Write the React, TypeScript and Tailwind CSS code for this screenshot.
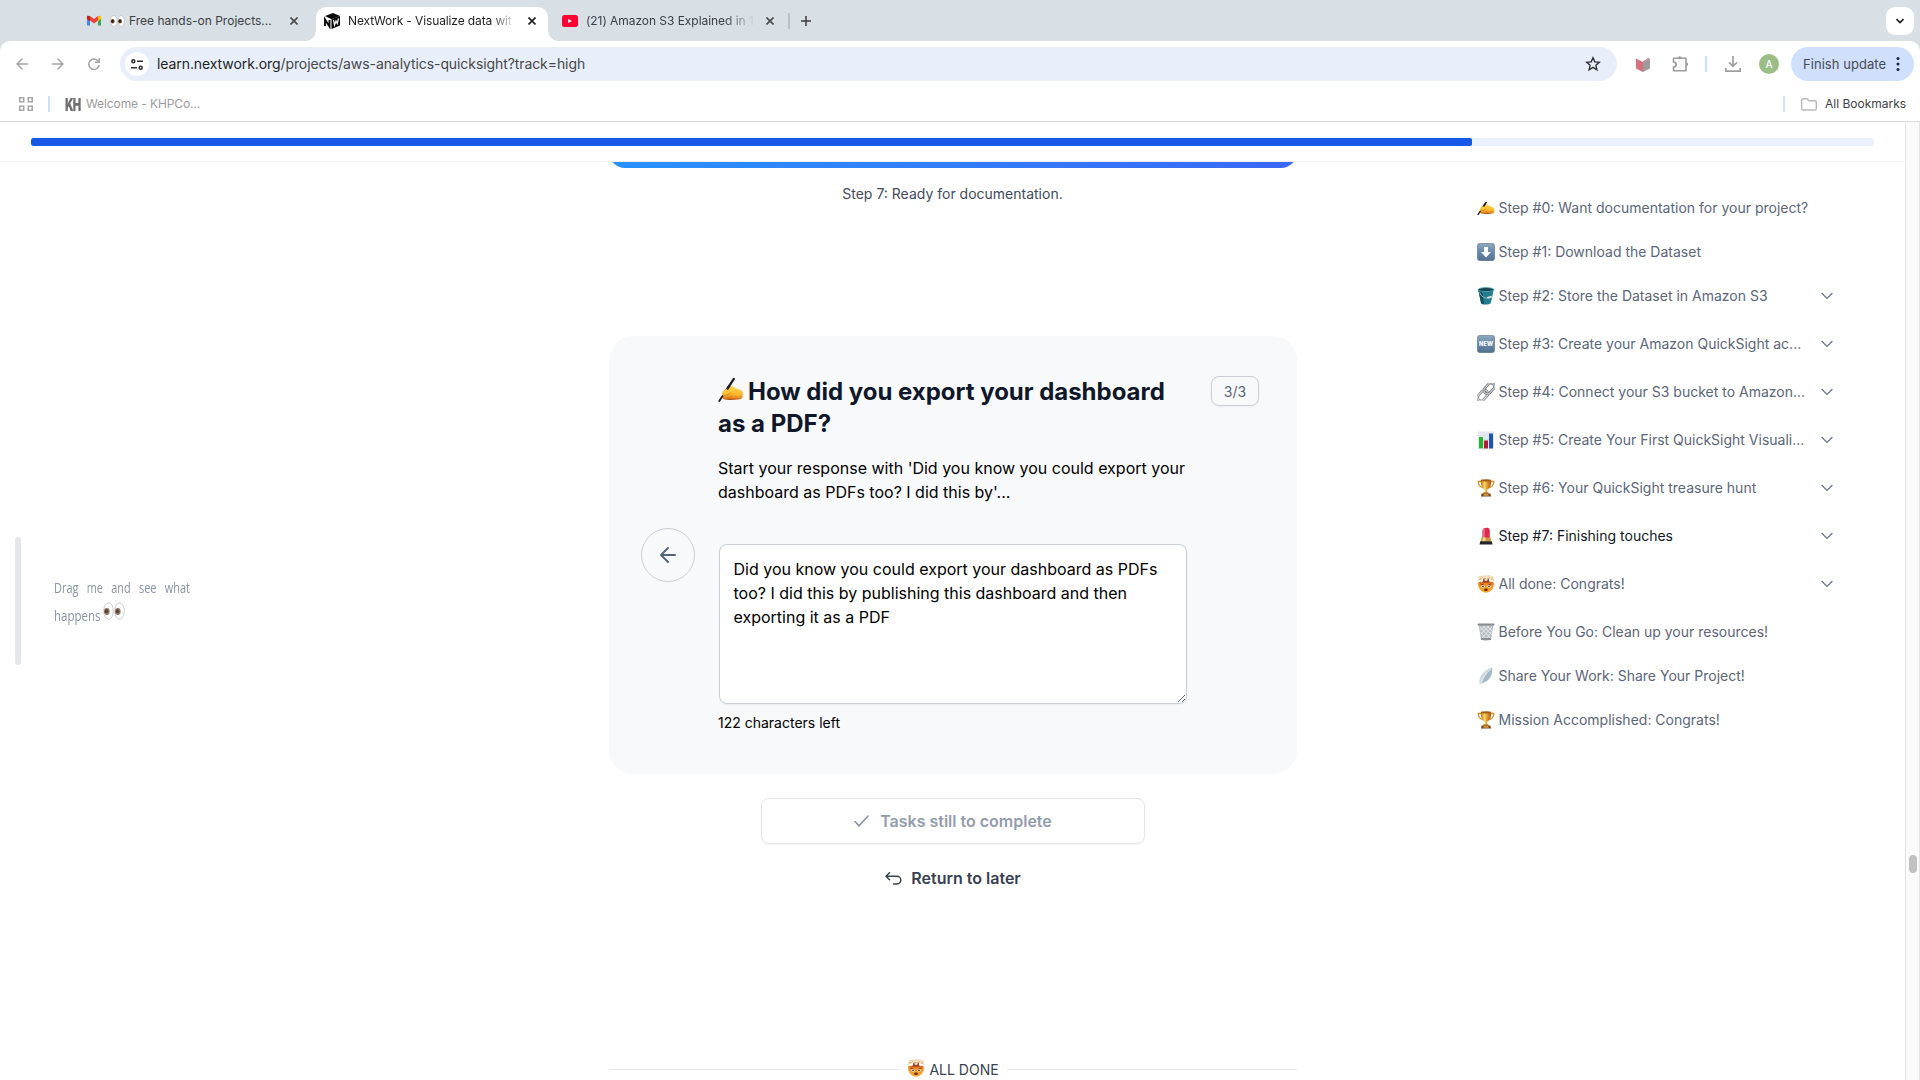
import type { ReactNode } from "react";

function Hand({ className = "", viewBox = "0 0 24 24" }: { className?: string; viewBox?: string }) {
  return (
    <svg viewBox={viewBox} className={className}>
      <defs>
        <linearGradient id="skin" x1="0" y1="0" x2="0" y2="1">
          <stop offset="0" stopColor="#ffd64a" />
          <stop offset="0.6" stopColor="#fcb62f" />
          <stop offset="0.85" stopColor="#e8891f" />
          <stop offset="1" stopColor="#a8480f" />
        </linearGradient>
      </defs>
      <path d="M4.500 14.500C6 12 9 9.300 12 9C14 8.900 15 9.400 16 10.300C18 11.300 20.500 11.800 22.500 13C24.300 14.500 24.300 19 22.800 20.600C19 22.300 9 22.300 5.500 21.300C3.300 20.500 3.200 17.500 4.500 14.500Z" fill="url(#skin)" />
      <path d="M5.500 17.600C8 17.800 10 16.800 12 15.500M6.500 20C9 20.200 11.500 19.500 13.500 18.300" fill="none" stroke="#d27c1b" strokeWidth="0.9" />
      <path d="M15.200 1.800L6.500 15" stroke="#1c2026" strokeWidth="2.200" strokeLinecap="round" />
      <path d="M4.200 18.500L1.200 23" stroke="#1c2026" strokeWidth="1.800" strokeLinecap="round" />
      <path d="M4.500 15.500C6 12.500 9.500 9.200 12.300 9.100C13.300 9.800 12.500 11.200 11.500 12L7 17Z" fill="#fec63b" />
      <path d="M11.200 8L8.700 11.800" stroke="#1c2026" strokeWidth="2.200" />
    </svg>
  );
}

function Eyes({ className }: { className: string }) {
  return (
    <svg viewBox="0 0 22 18" className={className}>
      <g fill="#fff" stroke="#b9b9b9" strokeWidth="0.900">
        <ellipse cx="5.500" cy="9" rx="4.800" ry="8.300" />
        <ellipse cx="16.500" cy="9" rx="4.800" ry="8.300" />
      </g>
      <g fill="#7a5130">
        <ellipse cx="3.800" cy="9.500" rx="2.800" ry="3.400" />
        <ellipse cx="14.800" cy="9.500" rx="2.800" ry="3.400" />
      </g>
      <g fill="#1f1612">
        <ellipse cx="3.500" cy="9.300" rx="1.600" ry="2" />
        <ellipse cx="14.500" cy="9.300" rx="1.600" ry="2" />
      </g>
    </svg>
  );
}

function MindBlown({ className = "size-[18px]" }: { className?: string }) {
  return (
    <svg viewBox="0 0 18 18" className={className}>
      <defs>
        <linearGradient id="face" x1="0" y1="0" x2="0" y2="1">
          <stop offset="0" stopColor="#e8641c" />
          <stop offset="0.5" stopColor="#f79a24" />
          <stop offset="1" stopColor="#f2a52e" />
        </linearGradient>
      </defs>
      <path d="M1.300 7.500C2.500 5.800 5 7.500 6.500 6.500C8 5.500 10 5.500 11.500 6.500C13 7.500 15.500 5.800 16.700 7.500C17.500 13 14 17.600 9 17.600C4 17.600 0.500 13 1.300 7.500Z" fill="url(#face)" />
      <path d="M5 7.800C6 6.500 6.500 5 6 3.500H12C11.500 5 12 6.500 13 7.800Z" fill="#9b4420" />
      <g fill="#f2ddbd">
        <circle cx="3" cy="3" r="2" /><circle cx="6.200" cy="1.800" r="1.700" /><circle cx="9.300" cy="1.900" r="1.800" />
        <circle cx="12.300" cy="1.800" r="1.700" /><circle cx="15.200" cy="3" r="2" /><circle cx="1.400" cy="5.200" r="1" />
        <circle cx="16.700" cy="5.200" r="1" /><circle cx="9" cy="4.500" r="1.600" />
      </g>
      <path d="M2.500 4.200L4.500 3.500M7.500 3L9 4M11 3.500L12.500 2.800M14 4.300L15.500 4M4.500 1.500L5.500 2.500" stroke="#e0914a" strokeWidth="0.900" />
      <path d="M3.500 8.800L6.700 10M14.500 8.800L11.300 10" stroke="#6e2c10" strokeWidth="0.900" />
      <circle cx="6" cy="11.300" r="1.500" fill="#fff" /><circle cx="12" cy="11.300" r="1.500" fill="#fff" />
      <circle cx="6" cy="11.300" r="0.900" fill="#4a210f" /><circle cx="12" cy="11.300" r="0.900" fill="#4a210f" />
      <ellipse cx="9" cy="14.800" rx="1.900" ry="1.200" fill="#6b2a12" />
    </svg>
  );
}

const Trophy = () => (
  <svg viewBox="0 0 18 18" className="size-[18px]">
    <defs>
      <linearGradient id="gold" x1="0" y1="0" x2="1" y2="0">
        <stop offset="0" stopColor="#b8691a" />
        <stop offset="0.350" stopColor="#fbd668" />
        <stop offset="0.650" stopColor="#dd9528" />
        <stop offset="1" stopColor="#a05512" />
      </linearGradient>
    </defs>
    <path d="M4.500 2.500H1.200C1.200 6 3 8 6.500 9M13.500 2.500H16.800C16.800 6 15 8 11.500 9" fill="none" stroke="#d99229" strokeWidth="1.300" />
    <path d="M3.800 1.200H14.200C14.200 6.500 12.800 9.800 10.200 10.600V13.500H7.800V10.600C5.200 9.800 3.800 6.500 3.800 1.200Z" fill="url(#gold)" />
    <ellipse cx="9" cy="1.400" rx="5.200" ry="1.100" fill="#a45c17" />
    <path d="M6.800 13H11.200L12 14.800H6Z" fill="#d58b26" />
    <path d="M4.600 14.500H13.400L14 17.600H4Z" fill="#7c4416" />
    <rect x="6.500" y="15.300" width="5" height="1.300" fill="#e4b252" />
  </svg>
);

function BlueTile({ children }: { children: ReactNode }) {
  return (
    <svg viewBox="0 0 18 18" className="size-[18px]">
      <defs>
        <linearGradient id="tile" x1="0" y1="0" x2="0" y2="1">
          <stop offset="0" stopColor="#8fa9bf" />
          <stop offset="0.5" stopColor="#6689a8" />
          <stop offset="1" stopColor="#54718f" />
        </linearGradient>
      </defs>
      <rect x="0.300" y="0.300" width="17.400" height="17.400" rx="3" fill="url(#tile)" stroke="#5c7186" strokeWidth="0.6" />
      {children}
    </svg>
  );
}

const DownTile = () => (
  <BlueTile>
    <path d="M7 4H11V9H14L9 14.500L4 9H7Z" fill="#fff" />
  </BlueTile>
);

const NewTile = () => (
  <BlueTile>
    <text x="9" y="11.200" textAnchor="middle" textLength="14" lengthAdjust="spacingAndGlyphs" fontSize="6.200" fontWeight="800" fontFamily="Inter" fill="#fff">NEW</text>
  </BlueTile>
);

const Bucket = () => (
  <svg viewBox="0 0 18 18" className="size-[18px]">
    <path d="M1.200 2.500L4 16C5.500 18 12 18 13.800 16L16.800 2.500Z" fill="#217d8f" />
    <path d="M1.200 2.500L4 16C4.600 17 6 17.400 7 17.500L5 3Z" fill="#15505e" />
    <ellipse cx="9" cy="2.600" rx="7.900" ry="2" fill="#16444f" stroke="#4cb2c0" strokeWidth="0.8" />
    <path d="M2.500 5C4 11 11 13 15.500 9.500" fill="none" stroke="#9ab7bd" strokeWidth="0.9" />
    <path d="M11 10.600L14 9.800" stroke="#dfe9ea" strokeWidth="1.700" strokeLinecap="round" />
  </svg>
);

const LinkIcon = () => (
  <svg viewBox="0 0 18 18" className="size-[18px]">
    <g fill="none" transform="rotate(-48 9 9)">
      <rect x="-1.800" y="5.600" width="12" height="6.800" rx="3.400" stroke="#6a6f75" strokeWidth="2.500" />
      <rect x="-1.800" y="5.600" width="12" height="6.800" rx="3.400" stroke="#d6d9dc" strokeWidth="1.300" />
      <rect x="7.800" y="5.600" width="12" height="6.800" rx="3.400" stroke="#5c6166" strokeWidth="2.500" />
      <rect x="7.800" y="5.600" width="12" height="6.800" rx="3.400" stroke="#c9ccd0" strokeWidth="1.300" />
    </g>
  </svg>
);

const Chart = () => (
  <svg viewBox="0 0 18 18" className="size-[18px]">
    <rect x="1" y="0.500" width="16" height="17" fill="#e4eaef" />
    <path d="M1 4.500H17M1 8.500H17M1 12.500H17" stroke="#cdd6dd" strokeWidth="0.5" />
    <rect x="2" y="6" width="4" height="11.500" fill="#2ab12f" />
    <rect x="7" y="9.500" width="4" height="8" fill="#b51a35" />
    <rect x="12" y="2.500" width="4" height="15" fill="#1f55b0" />
  </svg>
);

const Lipstick = () => (
  <svg viewBox="0 0 18 18" className="size-[18px]">
    <path d="M5.500 11V4C5.500 1.500 8.500 0.300 11.500 1L12.800 3V11Z" fill="#e0284f" />
    <path d="M5.500 11V4C5.500 2.600 6.500 1.600 8 1.100V11Z" fill="#f2607c" />
    <path d="M4.500 10.500H13.500L14.300 14.500H3.700Z" fill="#c79a3d" />
    <path d="M6 10.500H8.500V14.500H5.500Z" fill="#f4de91" />
    <path d="M3.200 14.300H14.800L15.500 17.500H2.500Z" fill="#26242b" />
  </svg>
);

const Trash = () => (
  <svg viewBox="0 0 18 18" className="size-[18px]">
    <path d="M1.500 1.500L4 16.800C6 17.900 12 17.900 14 16.800L16.500 1.500Z" fill="#b9bec3" />
    <path d="M3 4L13 15M6 3L14 11M10 3L15 8M3.500 9L9 16M15 4L5 15M12 3L4 11M8 3L3.500 7M14.500 9L9 16" stroke="#eef0f1" strokeWidth="0.8" />
    <path d="M4 16H14" stroke="#858b91" strokeWidth="1.800" />
    <rect x="0.500" y="0.600" width="17" height="2" rx="0.800" fill="#868c91" />
  </svg>
);

const Feather = () => (
  <svg viewBox="0 0 18 18" className="size-[18px]">
    <path d="M14.800 0.500C16 6 14 12 8 15L4 17.500L2.500 17C1.500 9 6 3.500 14.800 0.500Z" fill="#cfdde3" />
    <path d="M14.800 0.500C16 6 14 12 8 15L4.500 16.500C6 10 10 5 14.800 0.500Z" fill="#a3bac4" />
    <path d="M14 2C9 6 5.500 11 4 17.500" fill="none" stroke="#eef4f6" strokeWidth="0.8" />
  </svg>
);

function Chevron() {
  return (
    <svg viewBox="0 0 12 8" className="h-2 w-3" fill="none" stroke="#64748b" strokeWidth="1.200">
      <path d="M0.600 1L6 6.500L11.400 1" />
    </svg>
  );
}

function Close({ dark = false }: { dark?: boolean }) {
  return (
    <svg viewBox="0 0 8 8" className="size-2 shrink-0" stroke={dark ? "#1f1f1f" : "#474747"} strokeWidth="1.600">
      <path d="M0.500 0.500L7.500 7.500M7.500 0.500L0.500 7.500" />
    </svg>
  );
}

const steps: { icon: ReactNode; label: string; expandable?: boolean; active?: boolean }[] = [
  { icon: <Hand viewBox="0 5.500 24.500 18" className="h-[13px] w-[18px]" />, label: "Step #0: Want documentation for your project?" },
  { icon: <DownTile />, label: "Step #1: Download the Dataset" },
  { icon: <Bucket />, label: "Step #2: Store the Dataset in Amazon S3", expandable: true },
  { icon: <NewTile />, label: "Step #3: Create your Amazon QuickSight ac...", expandable: true },
  { icon: <LinkIcon />, label: "Step #4: Connect your S3 bucket to Amazon...", expandable: true },
  { icon: <Chart />, label: "Step #5: Create Your First QuickSight Visuali...", expandable: true },
  { icon: <Trophy />, label: "Step #6: Your QuickSight treasure hunt", expandable: true },
  { icon: <Lipstick />, label: "Step #7: Finishing touches", expandable: true, active: true },
  { icon: <MindBlown />, label: "All done: Congrats!", expandable: true },
  { icon: <Trash />, label: "Before You Go: Clean up your resources!" },
  { icon: <Feather />, label: "Share Your Work: Share Your Project!" },
  { icon: <Trophy />, label: "Mission Accomplished: Congrats!" },
];

function TabStrip() {
  return (
    <div className="flex h-[41px] shrink-0 bg-[#d8dfe5] text-[12px] text-[#3c4043]">
      <div className="flex h-[41px] w-[306px] items-center pl-[87px]">
        <svg viewBox="0 0 14 11" className="h-[11px] w-[14px] shrink-0">
          <path d="M0 1.500V10.500H3V4Z" fill="#4285f4" />
          <path d="M14 1.500V10.500H11V4Z" fill="#34a853" />
          <path d="M11 1L14 0.800V4L11 6.200Z" fill="#fbbc04" />
          <path d="M3 1L0 0.800V4L3 6.200Z" fill="#c5221f" />
          <path d="M3 1L7 4L11 1V5.500L7 8.500L3 5.500Z" fill="#ea4335" />
        </svg>
        <Eyes className="mr-1 ml-[9px] h-3 w-[15px] shrink-0" />
        <span className="w-[151px] overflow-hidden whitespace-nowrap">Free hands-on Projects…</span>
        <span className="ml-[10px]"><Close /></span>
      </div>
      <div className="flex h-[41px] w-[252px] items-end">
        <div className="size-[10px] bg-[radial-gradient(circle_at_0_0,#d8dfe5_9.500px,#ffffff_10px)]" />
        <div className="flex h-[34px] w-[232px] items-center rounded-t-[10px] bg-white pb-[6px] pl-2 text-[#1f1f1f]">
          <svg viewBox="0 0 16 16" className="size-4 shrink-0">
            <path d="M1 3L9 0L16 3L7.500 6.200Z" fill="#0a0a0a" />
            <path d="M7.500 6.200L16 3V12.500L7.500 16Z" fill="#0a0a0a" />
            <path d="M1 13V6.500L5.500 13.500V7" fill="none" stroke="#0a0a0a" strokeWidth="1.900" />
            <path d="M9.500 7L10.500 12L12 8L13.300 10.500L14.500 5.500" fill="none" stroke="#fff" strokeWidth="1.200" />
          </svg>
          <span className="ml-2 w-[168px] tracking-[-0.120px] whitespace-nowrap [mask-image:linear-gradient(to_right,#000_85%,transparent)]">NextWork - Visualize data wit</span>
          <span className="ml-[12px]"><Close dark /></span>
        </div>
        <div className="size-[10px] bg-[radial-gradient(circle_at_100%_0,#d8dfe5_9.500px,#ffffff_10px)]" />
      </div>
      <div className="flex flex-1 items-center pl-1">
        <svg viewBox="0 0 16 12" className="h-3 w-4 shrink-0">
          <rect width="16" height="12" rx="2.500" fill="#ff0033" />
          <path d="M6.200 4V8L10 6Z" fill="#fff" />
        </svg>
        <span className="ml-2 w-[169px] tracking-[-0.050px] whitespace-nowrap [mask-image:linear-gradient(to_right,#000_82%,transparent)]">(21) Amazon S3 Explained in 1</span>
        <span className="ml-[11px]"><Close /></span>
        <span className="ml-[14px] h-4 w-[2px] bg-[#bfc0c2]" />
        <svg viewBox="0 0 10 10" className="ml-[11px] size-[10px]" stroke="#3c3c3c" strokeWidth="1.500"><path d="M5 0V10M0 5H10" /></svg>
        <span className="mr-[6px] ml-auto flex size-7 items-center justify-center rounded-[9px] bg-white">
          <svg viewBox="0 0 8 6" className="h-[6px] w-2" fill="none" stroke="#1f1f1f" strokeWidth="1.700"><path d="M0.500 1L4 4.500L7.500 1" /></svg>
        </span>
      </div>
    </div>
  );
}

function Toolbar() {
  return (
    <div className="shrink-0 bg-[#d8dfe5]">
      <div className="flex h-[46px] items-center rounded-t-[10px] bg-white pl-4">
        <svg viewBox="0 0 12 12" className="size-3" fill="none" stroke="#a3a3a3" strokeWidth="1.500"><path d="M12 6H1M6.300 0.700L1 6L6.300 11.300" /></svg>
        <svg viewBox="0 0 12 12" className="ml-6 size-3" fill="none" stroke="#a3a3a3" strokeWidth="1.500"><path d="M0 6H11M5.700 0.700L11 6L5.700 11.300" /></svg>
        <svg viewBox="0 0 12 12" className="ml-6 size-3" fill="none" stroke="#a3a3a3" strokeWidth="1.500"><path d="M10.200 3.200A5.200 5.200 0 1 0 11.100 7.200" /><path d="M11.200 0.300V4.300H7" /></svg>
        <div className="ml-5 flex h-[34px] w-[1497px] items-center rounded-full bg-[#e8effa] pr-4 pl-[5px]">
          <span className="flex size-6 items-center justify-center rounded-full bg-white">
            <svg viewBox="0 0 12 11" className="h-[11px] w-3" fill="none" stroke="#303030" strokeWidth="1.500">
              <circle cx="2.300" cy="2.300" r="1.500" /><path d="M6 2.300H12M0 8.700H6" /><circle cx="9.700" cy="8.700" r="1.500" />
            </svg>
          </span>
          <span className="ml-2 pb-px text-[14px] tracking-[-0.085px] text-[#474747]"><span className="text-[#1f1f1f]">learn.nextwork.org</span>/projects/aws-analytics-quicksight?track=high</span>
          <svg viewBox="0 0 16 16" className="ml-auto size-4" fill="none" stroke="#303030" strokeWidth="1.400"><path d="M8 1.800L9.800 5.900L14.300 6.300L10.900 9.300L11.900 13.800L8 11.400L4.100 13.800L5.100 9.300L1.700 6.300L6.200 5.900Z" /></svg>
        </div>
        <svg viewBox="0 0 14 15" className="ml-[19px] h-[15px] w-[14px]">
          <path d="M0 1.500L7 5V15L0 11.500Z" fill="#d6707f" />
          <path d="M14 1.500L7 5V15L14 11.500Z" fill="#9c9c9c" />
          <path d="M7 4.200L13 0.500V2.200L7 5.600Z" fill="#dd8996" />
        </svg>
        <svg viewBox="0 0 17 17" className="ml-[22px] size-[17px] -translate-y-px" fill="none" stroke="#9b9b9b" strokeWidth="1.600">
          <path d="M1.500 3.200H14V15.700H1.500V12C5 12 5 7 1.500 7Z" strokeLinejoin="round" />
          <path d="M6 3C6 0.500 9.500 0.500 9.500 3ZM14.300 7.500C16.800 7.500 16.800 11 14.300 11Z" fill="#9b9b9b" stroke="none" />
        </svg>
        <span className="ml-[16px] h-4 w-[2px] bg-[#cfe0fb]" />
        <svg viewBox="0 0 16 16" className="ml-[18px] size-4" fill="none" stroke="#a0a0a0" strokeWidth="1.700"><path d="M8 0V10M4 6.300L8 10.300L12 6.300M0.900 12V15.100H15.100V12" /></svg>
        <span className="ml-[18px] flex size-5 items-center justify-center rounded-full bg-[#9bbd86] text-[10px] font-medium text-white">A</span>
        <span className="ml-3 flex h-[34px] w-[123px] items-center rounded-full bg-[#cfdffc] pl-3 text-[13px] text-[#474c54]">
          <span className="w-[93px] pt-px tracking-[0.050px] whitespace-nowrap">Finish update</span>
          <svg viewBox="0 0 4 16" className="h-4 w-1" fill="#1b2440"><circle cx="2" cy="2.500" r="1.500" /><circle cx="2" cy="8" r="1.500" /><circle cx="2" cy="13.500" r="1.500" /></svg>
        </span>
      </div>
    </div>
  );
}

function Bookmarks() {
  return (
    <div className="flex h-[35px] shrink-0 items-center border-b border-[#d9dadc] bg-white pl-[19px] text-[12px] text-[#9b9b9b]">
      <svg viewBox="0 0 14 14" className="size-[14px]" fill="none" stroke="#a6a6a6" strokeWidth="1.500"><path d="M0.750 0.750h4v4h-4zM9.250 0.750h4v4h-4zM0.750 9.250h4v4h-4zM9.250 9.250h4v4h-4z" /></svg>
      <span className="ml-[15px] h-4 w-[2px] bg-[#cfe0fb]" />
      <span className="ml-[15px] w-[21px] origin-left scale-x-[0.750] scale-y-[1.150] text-[15px] leading-none font-black tracking-[-1px] text-[#6f6f6f]">KH</span>
      <span className="tracking-[-0.100px]">Welcome - KHPCo...</span>
      <span className="mr-[16px] ml-auto h-4 w-[2px] bg-[#cfe0fb]" />
      <svg viewBox="0 0 16 13" className="mr-2 h-[13px] w-4" fill="none" stroke="#b9b9b9" strokeWidth="1.400"><path d="M0.700 2V10.800Q0.700 12 2 12H14Q15.300 12 15.300 10.800V4Q15.300 2.800 14 2.800H8L6 0.800H2Q0.700 0.800 0.700 2Z" /></svg>
      <span className="w-[95px] whitespace-nowrap text-[#3f4144]">All Bookmarks</span>
    </div>
  );
}

function QuestionCard() {
  return (
    <section className="mt-[132px] flex h-[438px] w-[688px] shrink-0 rounded-3xl bg-[#f8f9fb] pt-10">
      <div className="flex w-[110px] justify-end pt-[152px] pr-6">
        <button className="flex size-[54px] items-center justify-center rounded-full border border-[#cbced6]">
          <svg viewBox="0 0 16 16" className="size-4" fill="none" stroke="#56627a" strokeWidth="1.900" strokeLinecap="round" strokeLinejoin="round"><path d="M15 8H1M8 1L1 8L8 15" /></svg>
        </button>
      </div>
      <div className="w-[468px]">
        <h2 className="-ml-px text-[24px] leading-8 font-bold text-[#0f172a]">
          <Hand className="mr-[5px] -mt-[7px] inline-block size-[25px]" />
          <span className="tracking-[-0.020px]">How did you export your dashboard</span>
          <br />as a PDF?
        </h2>
        <p className="mt-4 -ml-px text-[16px] leading-6 whitespace-nowrap text-black">Start your response with 'Did you know you could export your<br />dashboard as PDFs too? I did this by'...</p>
        <textarea
          className="mt-10 block h-40 w-[468px] rounded-lg border border-[#c9cdd8] bg-white py-3 pr-[14px] pl-[13.500px] text-[16px] leading-6 text-black shadow-xs"
          defaultValue="Did you know you could export your dashboard as PDFs too? I did this by publishing this dashboard and then exporting it as a PDF"
        />
        <p className="mt-[9px] -ml-px text-[14px] leading-5 text-black">122 characters left</p>
      </div>
      <span className="ml-6 flex h-[30px] w-12 items-center justify-center rounded-lg border border-[#cbced6] text-[14px] text-[#5b667a] shadow-xs">3/3</span>
    </section>
  );
}

export default function App() {
  return (
    <div className="flex h-[1080px] w-[1920px] flex-col overflow-hidden bg-white font-[Inter,sans-serif]">
      <TabStrip />
      <Toolbar />
      <Bookmarks />
      <div className="flex min-h-0 flex-1">
        <div className="flex w-[1905px] flex-col">
          <header className="flex h-10 shrink-0 items-center border-b border-[#eff0f2] px-[31px]">
            <div className="h-2 w-full overflow-hidden rounded-[2px] bg-[#ebf1fe]">
              <div className="h-2 w-[1441px] rounded-[2px] bg-[#1858e6]" />
            </div>
          </header>
          <div className="flex min-h-0 flex-1 overflow-hidden">
            <aside className="flex w-[609px] pt-[375px] pl-[15px]">
              <div className="h-32 w-[6px] rounded-full bg-[#e5e7eb]" />
              <div className="ml-[33px] pt-[38px] font-['Liberation_Sans_Narrow','Open_Sans',sans-serif] text-[14px] leading-[26px] whitespace-nowrap text-[#8893a7]">
                <p className="w-[138px] origin-left scale-x-[0.780] [word-spacing:7px]">Drag me and see what</p>
                <div className="flex items-start">
                  <p className="w-[49px] origin-left scale-x-[0.820] pt-[2px]">happens</p>
                  <Eyes className="mt-px h-[18px] w-[22px] opacity-80" />
                </div>
              </div>
            </aside>
            <main className="flex w-[688px] shrink-0 flex-col items-center">
              <div className="flex h-[6px] w-[688px] shrink-0 items-end overflow-hidden">
                <div className="h-[60px] w-full shrink-0 rounded-2xl bg-linear-to-r from-[#2891fb] to-[#3a68f5]" />
              </div>
              <p className="mt-4 mr-px h-5 shrink-0 text-[14px] leading-5 text-[#414b5c]">Step 7: Ready for documentation.</p>
              <QuestionCard />
              <button className="mt-6 flex h-[46px] w-[384px] shrink-0 items-center justify-center rounded-lg border border-[#e4e6ea] text-[16px] font-semibold text-[#939cae] shadow-xs">
                <svg viewBox="0 0 15 12" className="mr-[11px] h-3 w-[15px]" fill="none" stroke="#8590a5" strokeWidth="1.500" strokeLinecap="round"><path d="M1 6.500L5 10.800L14 1" /></svg>
                Tasks still to complete
              </button>
              <button className="mt-[22px] flex h-6 shrink-0 items-center text-[16px] font-semibold text-[#374151]">
                <svg viewBox="0 0 17 13" className="mr-[9px] h-[13px] w-[17px]" fill="none" stroke="#374151" strokeWidth="1.500" strokeLinecap="round" strokeLinejoin="round"><path d="M4.500 0.800L1 4.300L4.500 7.800M1 4.300H12A3.800 3.800 0 0 1 12 11.900H8.500" /></svg>
                Return to later
              </button>
              <div className="mt-[167px] flex h-6 w-full shrink-0 items-center text-[14px] text-[#374151]">
                <span className="h-px flex-1 bg-[#e5e7eb]" />
                <MindBlown className="mr-1 mb-[2px] ml-[8px] size-[18px]" />
                <span className="mr-2">ALL DONE</span>
                <span className="h-px flex-1 bg-[#e5e7eb]" />
              </div>
            </main>
            <nav className="ml-[180px] w-[360px] pt-6">
              {steps.map((s, i) => (
                <div key={i} className={s.expandable ? "h-12" : "h-11"}>
                  <div className="flex h-11 items-center">
                    <span className="flex size-[18px] shrink-0 items-center">{s.icon}</span>
                    <span className={`ml-[3.500px] w-[322.500px] pb-[2px] text-[14px] whitespace-nowrap ${s.active ? "text-[#0f172a]" : "text-[#5b667a]"}`}>{s.label}</span>
                    {s.expandable && <Chevron />}
                  </div>
                </div>
              ))}
            </nav>
          </div>
        </div>
        <div className="flex w-[15px] justify-center border-x border-[#e4e4e4] bg-[#fafafa] pt-[733px]">
          <div className="h-[18px] w-2 rounded-full bg-[#c1c1c1]" />
        </div>
      </div>
    </div>
  );
}
